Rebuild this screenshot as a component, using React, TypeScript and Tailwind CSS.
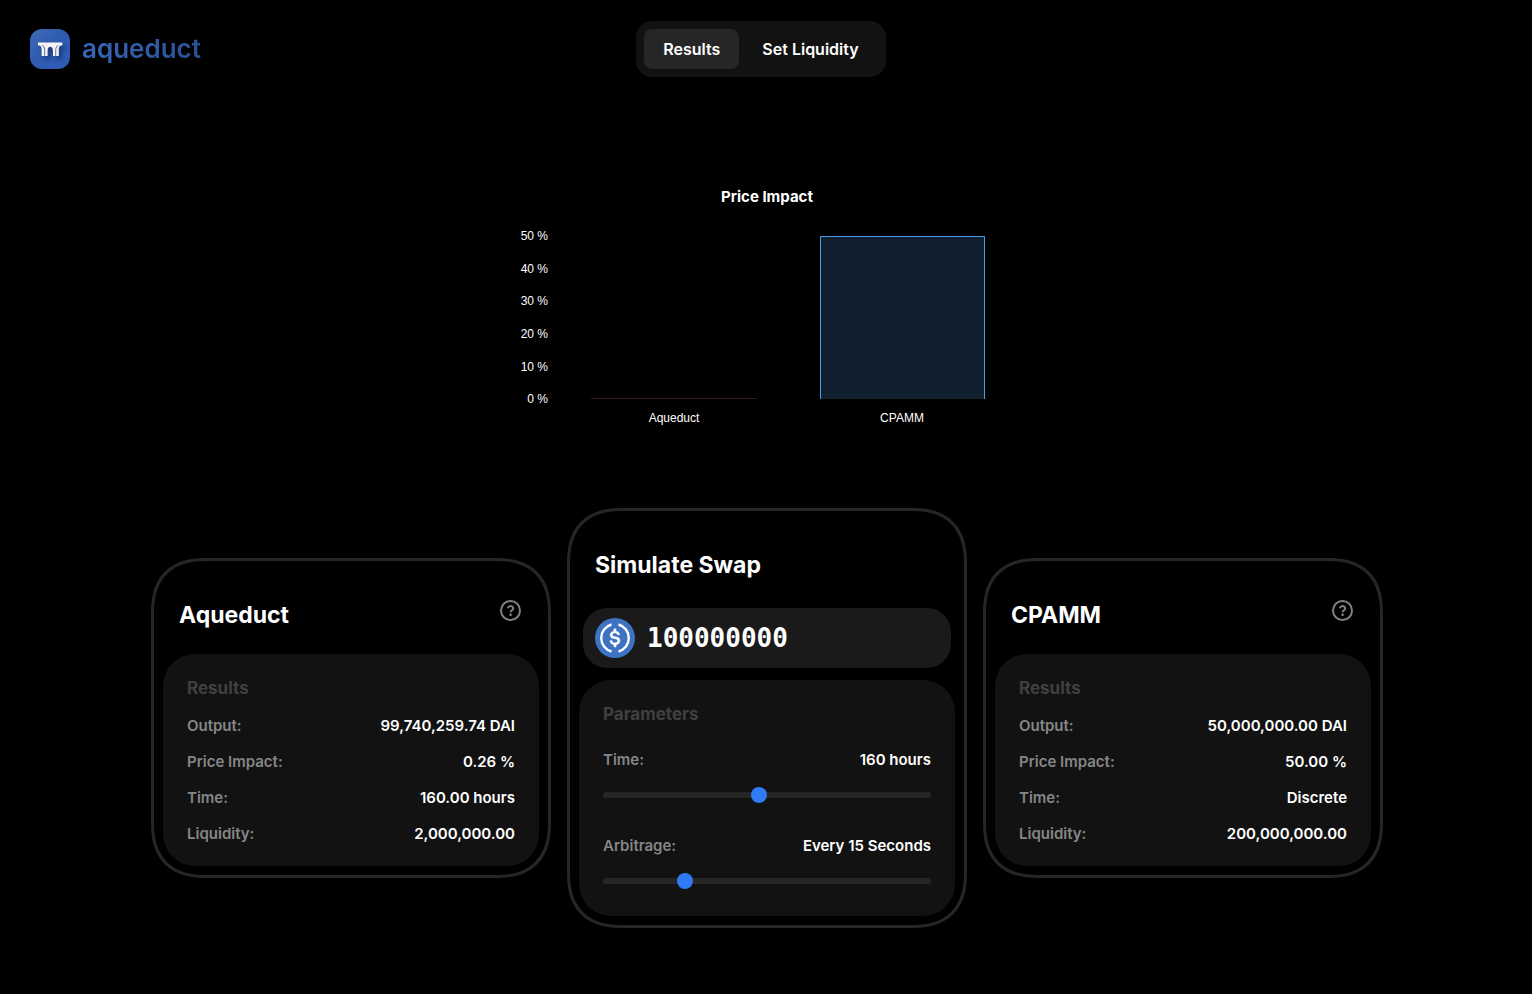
import { useState, type ReactNode } from "react";

type Row = { label: string; value: string };

const aqueductRows: Row[] = [
  { label: "Output:", value: "99,740,259.74 DAI" },
  { label: "Price Impact:", value: "0.26 %" },
  { label: "Time:", value: "160.00 hours" },
  { label: "Liquidity:", value: "2,000,000.00" },
];

const cpammRows: Row[] = [
  { label: "Output:", value: "50,000,000.00 DAI" },
  { label: "Price Impact:", value: "50.00 %" },
  { label: "Time:", value: "Discrete" },
  { label: "Liquidity:", value: "200,000,000.00" },
];

function LogoMark() {
  return (
    <svg width="40" height="40" viewBox="0 0 40 40" aria-hidden="true">
      <defs>
        <linearGradient id="tile" x1="0" y1="0" x2="1" y2="1">
          <stop offset="0" stopColor="#3f6ab5" />
          <stop offset="0.5" stopColor="#2f5bb0" />
          <stop offset="1" stopColor="#2f5cb8" />
        </linearGradient>
        <filter id="shade" x="-50%" y="-50%" width="200%" height="200%">
          <feDropShadow dx="3" dy="3" stdDeviation="2.5" floodColor="#0c2350" floodOpacity="0.7" />
        </filter>
      </defs>
      <rect width="40" height="40" rx="12" fill="url(#tile)" />
      <g filter="url(#shade)">
        <path fill="#f4f4f4" d="M8 13.500h24.300v2.700H8z" />
        <path fill="#f4f4f4" d="M8.500 16c2.300.500 3.200 2 3.200 4.500V27h2.600v-6c0-2.200-1-3.900-2.800-5z" />
        <path fill="#f4f4f4" d="M31.800 16c-2.300.500-3.100 2-3.100 4.500V27h-2.500v-6c0-2.200 1-3.900 2.800-5z" />
        <path
          fill="#f4f4f4"
          d="M12.300 16c2 .900 2.900 2.700 2.900 5v6h2.300v-5.500c0-2.400 1-3.700 2.700-3.700s2.800 1.300 2.800 3.700V27h2.300v-6c0-2.300.900-4.100 2.900-5z"
        />
      </g>
    </svg>
  );
}

function UsdcIcon() {
  return (
    <svg width="40" height="40" viewBox="0 0 32 32" aria-hidden="true" className="shrink-0">
      <circle cx="16" cy="16" r="16" fill="#3e73c4" />
      <g fill="none" stroke="#fff" strokeWidth="1.900">
        <path d="M13.200 5.200A11.200 11.200 0 0 0 13.200 26.800" />
        <path d="M18.800 5.200A11.200 11.200 0 0 1 18.800 26.800" />
      </g>
      <path
        fill="#fff"
        stroke="#fff"
        strokeWidth="0.300"
        d="M20.022 18.124c0-2.124-1.280-2.852-3.840-3.156-1.828-.243-2.193-.728-2.193-1.578 0-.850.610-1.396 1.828-1.396 1.097 0 1.707.364 2.011 1.275a.458.458 0 00.427.303h.975a.416.416 0 00.427-.425v-.060a3.040 3.040 0 00-2.743-2.489V9.142c0-.243-.183-.425-.487-.486h-.915c-.243 0-.426.182-.487.486v1.396c-1.829.242-2.986 1.456-2.986 2.974 0 2.002 1.218 2.791 3.778 3.095 1.707.303 2.255.668 2.255 1.639 0 .970-.853 1.638-2.011 1.638-1.585 0-2.133-.667-2.316-1.578-.060-.242-.244-.364-.427-.364h-1.036a.416.416 0 00-.426.425v.060c.243 1.518 1.219 2.610 3.230 2.914v1.457c0 .242.183.425.487.485h.915c.243 0 .426-.182.487-.485V21.340c1.829-.303 3.047-1.578 3.047-3.217z"
      />
    </svg>
  );
}

function HelpIcon() {
  return (
    <svg width="24" height="24" viewBox="0 0 24 24" fill="none" stroke="currentColor" strokeWidth="2" aria-hidden="true">
      <circle cx="11.500" cy="12.500" r="9.500" />
      <path d="M9 10.300a2.600 2.300 0 1 1 4.100 1.900c-.900.600-1.500 1-1.500 2.100" />
      <circle cx="11.600" cy="16.700" r="1.300" fill="currentColor" stroke="none" />
    </svg>
  );
}

function Card({ title, help, children }: { title: string; help?: boolean; children: ReactNode }) {
  return (
    <section className="w-[400px] rounded-[56px] border-[3px] border-[#262626] p-[9px] [corner-shape:superellipse(1.3)]">
      <div className="flex h-[84px] items-start justify-between px-4 pt-7">
        <h2 className="text-[23px] leading-[34px] font-bold">{title}</h2>
        {help && (
          <button type="button" aria-label={`About ${title}`} className="text-[#808080]">
            <HelpIcon />
          </button>
        )}
      </div>
      {children}
    </section>
  );
}

function ResultsPanel({ rows }: { rows: Row[] }) {
  return (
    <div className="rounded-[32px] bg-[#121212] px-6 py-5">
      <h3 className="text-[17px] leading-7 font-bold text-[#404040]">Results</h3>
      <dl className="mt-3 flex flex-col gap-3 text-[15px] leading-6 font-semibold">
        {rows.map((row) => (
          <div key={row.label} className="flex justify-between">
            <dt className="text-[#868686]">{row.label}</dt>
            <dd>{row.value}</dd>
          </div>
        ))}
      </dl>
    </div>
  );
}

function Slider({
  id,
  label,
  value,
  position,
  onChange,
}: {
  id: string;
  label: string;
  value: string;
  position: number;
  onChange: (n: number) => void;
}) {
  return (
    <div>
      <div className="flex justify-between text-[15px] leading-6 font-semibold">
        <label htmlFor={id} className="text-[#868686]">
          {label}
        </label>
        <output htmlFor={id}>{value}</output>
      </div>
      <input
        id={id}
        type="range"
        min={0}
        max={1000}
        value={position}
        onChange={(e) => onChange(Number(e.target.value))}
        className="mt-5 block h-1.5 w-full appearance-none rounded-full bg-[#262626] [&::-webkit-slider-thumb]:size-4 [&::-webkit-slider-thumb]:appearance-none [&::-webkit-slider-thumb]:rounded-full [&::-webkit-slider-thumb]:bg-[#2f7bf6]"
      />
    </div>
  );
}

function PriceImpactChart() {
  return (
    <figure className="mx-auto w-[500px] font-['Liberation_Sans',sans-serif]">
      <figcaption className="text-center font-['Inter',sans-serif] text-[15px] leading-5 font-bold">Price Impact</figcaption>
      <svg width="500" height="227" viewBox="0 0 500 227" className="block" role="img" aria-label="Price impact by market maker">
        <g fill="#fff" fontSize="12" textAnchor="end">
          <text x="31" y="33">50 %</text>
          <text x="31" y="66">40 %</text>
          <text x="31" y="98">30 %</text>
          <text x="31" y="131">20 %</text>
          <text x="31" y="164">10 %</text>
          <text x="31" y="196">0 %</text>
        </g>
        <rect x="74" y="191" width="166" height="1" fill="#40171f" />
        <rect x="303" y="29" width="165" height="163" fill="#11202e" />
        <path d="M303.500 192V29.500H467.500V192" fill="none" stroke="#4a9de6" />
        <g fill="#fff" fontSize="12" textAnchor="middle">
          <text x="157" y="215">Aqueduct</text>
          <text x="385" y="215">CPAMM</text>
        </g>
      </svg>
    </figure>
  );
}

export default function App() {
  const [amount, setAmount] = useState("100000000");
  const [time, setTime] = useState(475);
  const [arbitrage, setArbitrage] = useState(238);

  return (
    <div className="min-h-screen bg-black font-['Inter',sans-serif] text-base text-white">
      <header className="grid grid-cols-[1fr_auto_1fr] items-center px-[30px] pt-[21px]">
        <a href="#" className="flex items-center gap-3">
          <LogoMark />
          <span className="bg-linear-to-r from-[#3767b8] to-[#2a5096] bg-clip-text text-[26px] leading-10 font-semibold text-transparent">
            aqueduct
          </span>
        </a>
        <nav className="mr-[10px] flex gap-1 rounded-2xl bg-[#121212] p-2 font-semibold">
          <button type="button" className="rounded-lg bg-[#262626] px-[19px] py-2">
            Results
          </button>
          <button type="button" className="rounded-lg px-[19px] py-2">
            Set Liquidity
          </button>
        </nav>
      </header>

      <main className="pt-[110px] pl-0.5">
        <PriceImpactChart />
        <div className="mt-[74px] flex flex-wrap items-center justify-center gap-4">
          <Card title="Aqueduct" help>
            <ResultsPanel rows={aqueductRows} />
          </Card>
          <Card title="Simulate Swap">
            <div className="mx-1 mt-1 flex h-[60px] items-center gap-3 rounded-3xl bg-[#1a1a1a] px-3">
              <UsdcIcon />
              <input
                type="text"
                aria-label="Swap amount"
                value={amount}
                onChange={(e) => setAmount(e.target.value)}
                className="w-full min-w-0 bg-transparent font-['DejaVu_Sans_Mono',monospace] text-[26px] leading-8 font-bold outline-none"
              />
            </div>
            <div className="mt-3 rounded-[32px] bg-[#121212] px-6 pt-5 pb-8">
              <h3 className="text-[17px] leading-7 font-bold text-[#404040]">Parameters</h3>
              <div className="mt-5 flex flex-col gap-9">
                <Slider id="time" label="Time:" value="160 hours" position={time} onChange={setTime} />
                <Slider id="arbitrage" label="Arbitrage:" value="Every 15 Seconds" position={arbitrage} onChange={setArbitrage} />
              </div>
            </div>
          </Card>
          <Card title="CPAMM" help>
            <ResultsPanel rows={cpammRows} />
          </Card>
        </div>
      </main>
    </div>
  );
}
